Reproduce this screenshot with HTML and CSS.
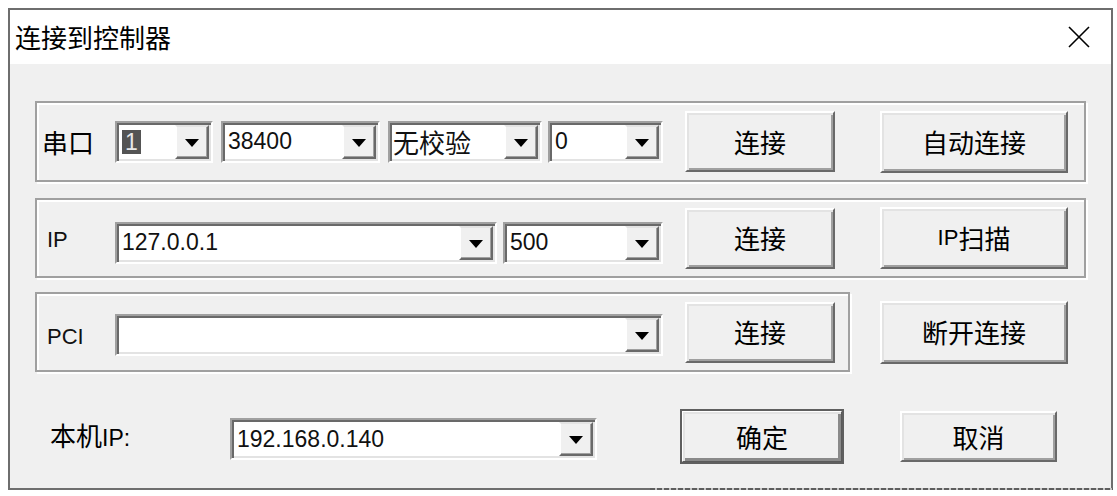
FILE: index.html
```html
<!DOCTYPE html>
<html lang="zh-CN">
<head>
<meta charset="utf-8">
<title>连接到控制器</title>
<link rel="stylesheet" href="styles.css">
</head>
<body>
<div class="dialog">
  <div class="titlebar">
    <span class="title">连接到控制器</span>
    <svg class="close" width="22" height="22" viewBox="0 0 22 22"><path d="M1 1 L21 21 M21 1 L1 21" stroke="#000" stroke-width="1.6" fill="none"/></svg>
  </div>
  <div class="content">
    <div class="group g1">
      <span class="lab lab-cn">串口</span>
      <div class="combo w-c1"><span class="val"><span class="sel">1</span></span><span class="drop"><i class="arrow"></i></span></div>
      <div class="combo w-c2 ml8"><span class="val">38400</span><span class="drop"><i class="arrow"></i></span></div>
      <div class="combo w-c3 ml8"><span class="val cn">无校验</span><span class="drop"><i class="arrow"></i></span></div>
      <div class="combo w-c4 ml6"><span class="val">0</span><span class="drop"><i class="arrow"></i></span></div>
      <button class="btn btn-main">连接</button>
      <button class="btn btn-side tall">自动连接</button>
    </div>
    <div class="group g2">
      <span class="lab lab-en">IP</span>
      <div class="combo w-ip"><span class="val">127.0.0.1</span><span class="drop"><i class="arrow"></i></span></div>
      <div class="combo w-port ml6"><span class="val">500</span><span class="drop"><i class="arrow"></i></span></div>
      <button class="btn btn-main">连接</button>
      <button class="btn btn-side tall"><span class="en">IP</span>扫描</button>
    </div>
    <div class="row3">
      <div class="group g3">
        <span class="lab lab-en">PCI</span>
        <div class="combo w-pci"><span class="val"></span><span class="drop"><i class="arrow"></i></span></div>
        <button class="btn btn-main">连接</button>
      </div>
      <button class="btn btn-side out">断开连接</button>
    </div>
    <div class="bottom">
      <span class="lab-local">本机<span class="en">IP:</span></span>
      <div class="combo w-local"><span class="val">192.168.0.140</span><span class="drop"><i class="arrow"></i></span></div>
      <button class="btn btn-ok">确定</button>
      <button class="btn btn-cancel">取消</button>
    </div>
  </div>
</div>
</body>
</html>
```
FILE: styles.css
```css
* { box-sizing: border-box; }
html, body { margin: 0; background: #fff; }
body {
  padding: 8px;
  font-family: "Noto Sans CJK SC", "Noto Sans", sans-serif;
  color: #000;
}
.dialog {
  position: relative;
  width: 1105px;
  height: 482px;
  border: 2px solid #6e6e6e;
  background: #f0f0f0;
  display: flex;
  flex-direction: column;
}
.dialog::after {
  content: "";
  position: absolute;
  left: 640px;
  right: -2px;
  bottom: -2px;
  height: 2px;
  background: repeating-linear-gradient(90deg, #5e5e5e 0 5px, #c4c4c4 5px 7px);
}
.titlebar {
  height: 54px;
  background: #fff;
  display: flex;
  align-items: center;
  justify-content: space-between;
  padding: 0 21px 0 5px;
}
.title { font-size: 26px; line-height: 1; }
.close { display: block; }

.content {
  padding: 37px 0 0 25px;
  display: flex;
  flex-direction: column;
}
.group {
  display: flex;
  align-items: center;
  border: 2px solid #a0a0a0;
  box-shadow: inset 2px 2px 0 #fff, 2px 2px 0 #fff;
  padding-left: 5px;
}
.g1 { width: 1051px; height: 81px; }
.g2 { width: 1051px; height: 80px; margin-top: 16px; }
.g2 .combo { margin-top: 9px; }
.row3 { display: flex; align-items: center; margin-top: 14px; }
.g3 { width: 815px; height: 80px; }
.g3 .combo { margin-top: 6px; }

.lab { width: 73px; flex: none; line-height: 1; }
.lab-cn { font-size: 26px; }
.lab-en {
  padding-left: 5px;
  font-family: "Liberation Sans", Arial, sans-serif;
  font-size: 22px;
  color: #111;
}
.g2 .lab-en { margin-top: 4px; }
.g3 .lab-en { margin-top: 10px; }
.en { font-family: "Liberation Sans", Arial, sans-serif; }

.combo {
  flex: none;
  display: flex;
  height: 42px;
  border: 2px solid;
  border-color: #a0a0a0 #fff #fff #a0a0a0;
  padding: 2px;
  background: #fff;
  box-shadow: inset 2px 2px 0 #696969, inset -2px -2px 0 #e3e3e3;
}
.combo .val {
  flex: 1;
  display: flex;
  align-items: center;
  padding-left: 3px;
  font-family: "Liberation Sans", Arial, sans-serif;
  font-size: 23px;
  color: #111;
  white-space: nowrap;
  overflow: hidden;
}
.combo .val.cn { font-family: "Noto Sans CJK SC", sans-serif; font-size: 26px; padding-left: 1px; }
.sel {
  background: #545454;
  color: #e8e8e8;
  padding: 0 3px;
  line-height: 24px;
}
.drop {
  flex: none;
  width: 34px;
  background: #f0f0f0;
  border: 2px solid;
  border-color: #e3e3e3 #696969 #696969 #fff;
  box-shadow: inset -1px -1px 0 #a0a0a0;
  display: flex;
  align-items: center;
  justify-content: center;
}
.arrow {
  display: block;
  width: 0;
  height: 0;
  border-left: 7px solid transparent;
  border-right: 7px solid transparent;
  border-top: 8px solid #000;
  margin-top: 2px;
}
.w-c1 { width: 98px; }
.w-c2 { width: 159px; }
.w-c3 { width: 154px; }
.w-c4 { width: 115px; }
.w-ip { width: 382px; }
.w-port { width: 160px; }
.w-pci { width: 548px; }
.w-local { width: 367px; margin-top: 5px; }
.ml8 { margin-left: 8px; }
.ml6 { margin-left: 6px; }

.btn {
  flex: none;
  font-family: "Noto Sans CJK SC", sans-serif;
  font-size: 26px;
  line-height: 1;
  color: #000;
  background: #f0f0f0;
  border: 2px solid;
  border-color: #fff #696969 #696969 #fff;
  box-shadow: inset 2px 2px 0 #e3e3e3, inset -2px -2px 0 #a0a0a0;
  padding: 0;
  height: 61px;
  display: flex;
  align-items: center;
  justify-content: center;
}
.btn .en { font-size: 22px; }
.btn-main { width: 150px; margin-left: 22px; }
.btn-side { width: 188px; margin-left: 45px; }
.btn-side.tall { height: 62px; }
.btn-side.out { margin-left: 30px; height: 63px; }

.bottom {
  display: flex;
  align-items: center;
  height: 53px;
  margin-top: 38px;
}
.lab-local {
  width: 195px;
  flex: none;
  padding-left: 15px;
  font-size: 26px;
  line-height: 1;
  margin-top: -2px;
}
.lab-local .en { font-size: 23px; }
.btn-ok {
  width: 162px;
  height: 53px;
  margin-left: 84px;
  border-color: #fff #5a5a5a #5a5a5a #fff;
  outline: 2px solid #5f5f5f;
  outline-offset: -1px;
  box-shadow: inset 2px 2px 0 #e3e3e3, inset -3px -3px 0 #8a8a8a;
}
.btn-cancel {
  width: 157px;
  height: 51px;
  margin-left: 57px;
}
```
